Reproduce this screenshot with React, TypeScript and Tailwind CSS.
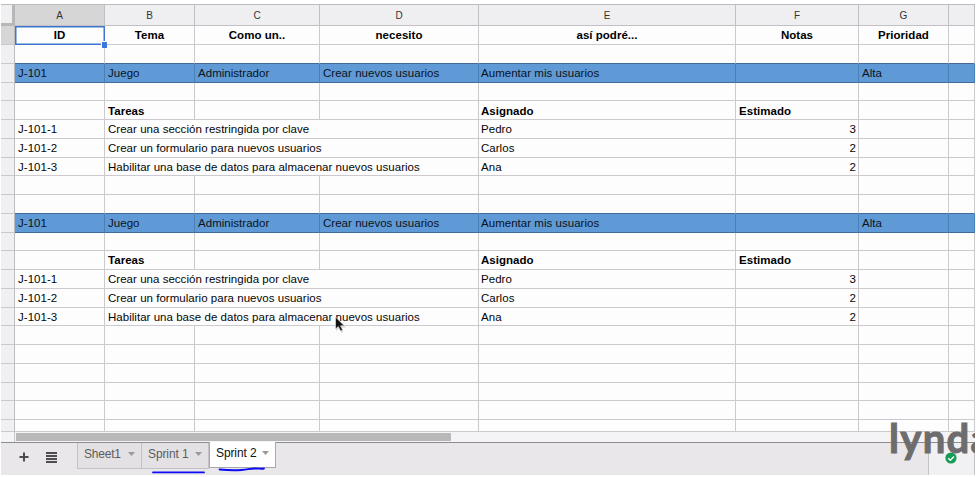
import React from "react";

type Row = {
  h: number;
  kind?: "head" | "story" | "task" | "tail";
  cells?: string[];
};

const titles = ["ID", "Tema", "Como un..", "necesito", "así podré...", "Notas", "Prioridad", ""];
const story = ["J-101", "Juego", "Administrador", "Crear nuevos usuarios", "Aumentar mis usuarios", "", "Alta", ""];
const labels = ["", "Tareas", "", "", "Asignado", "Estimado", "", ""];
const task1 = ["J-101-1", "Crear una sección restringida por clave", "Pedro", "3", "", ""];
const task2 = ["J-101-2", "Crear un formulario para nuevos usuarios", "Carlos", "2", "", ""];
const task3 = ["J-101-3", "Habilitar una base de datos para almacenar nuevos usuarios", "Ana", "2", "", ""];

const rows: Row[] = [
  { h: 19, kind: "head", cells: titles },
  { h: 19 },
  { h: 19, kind: "story", cells: story },
  { h: 18 },
  { h: 19, cells: labels },
  { h: 19, kind: "task", cells: task1 },
  { h: 19, kind: "task", cells: task2 },
  { h: 18, kind: "task", cells: task3 },
  { h: 19 },
  { h: 19, kind: "tail" },
  { h: 19, kind: "story", cells: story },
  { h: 18 },
  { h: 19, cells: labels },
  { h: 19, kind: "task", cells: task1 },
  { h: 19, kind: "task", cells: task2 },
  { h: 18, kind: "task", cells: task3 },
  { h: 19 },
  { h: 19 },
  { h: 19 },
  { h: 18 },
  { h: 19 },
  { h: 12 },
];

const grid = "grid grid-cols-[14px_90px_90px_125px_159px_257px_123px_90px_26px]";
const blank = ["", "", "", "", "", "", "", ""];

function SheetRow({ row, index }: { row: Row; index: number }) {
  const isStory = row.kind === "story";
  const isTask = row.kind === "task";
  const nextIsStory = rows[index + 1]?.kind === "story";
  const line = isStory || nextIsStory ? "border-b-[#426b98]" : "border-b-[#cccacf]";
  const lowered = index === 4 || row.h === 18;
  return (
    <div className={grid} style={{ height: row.h }}>
      <div
        className={`border-r border-b border-r-[#bdbbc0] border-b-[#c9c8cb] ${
          index === 0 ? "bg-[#d6d6d7]" : "bg-[#f0eff1]"
        }`}
      />
      {(row.cells ?? blank).map((text, i) => {
        const bold = row.kind === "head" || row.cells === labels;
        const column = isTask && i > 1 ? i + 2 : i;
        const align =
          row.kind === "head"
            ? "justify-center"
            : isTask && i === 3
              ? "justify-end pr-[2px]"
              : column === 4
                ? "pl-[2px]"
                : "pl-[3px]";
        return (
          <div
            key={i}
            className={`flex min-w-0 items-center whitespace-nowrap border-r border-b text-[11.5px] leading-none tracking-[0.03px] ${line} ${
              isStory ? "border-r-[#4b7fb8] bg-[#609ad6] text-[#0a121c]" : "border-r-[#cccacf] bg-[#fdfdfe] text-[#050505]"
            } ${bold ? "font-bold text-black" : ""} ${align} ${isTask && i === 1 ? "col-span-3" : ""}`}
          >
            {text && <span className={lowered ? "pt-[3px]" : "pt-px"}>{text}</span>}
          </div>
        );
      })}
    </div>
  );
}

function Caret() {
  return (
    <svg className="h-[4px] w-[7px]" viewBox="0 0 7 4">
      <path d="M0 0h7L3.5 4z" fill="#9b9a9b" />
    </svg>
  );
}

export default function App() {
  return (
    <div className="relative h-[477px] w-[976px] overflow-hidden bg-white pl-px pt-1 font-['Liberation_Sans',Arial,sans-serif]">
      <div className="w-[974px] overflow-hidden">
        <div className={`${grid} h-[22px] border-t border-[#bdbbbf]`}>
          <div className="border-r-[3px] border-b-[3px] border-[#b8b7b8] bg-[#f0eff1]" />
          {["A", "B", "C", "D", "E", "F", "G", ""].map((c, i) => (
            <div
              key={i}
              className={`flex items-center justify-center border-r border-b border-[#c2c0c4] pt-px text-[10px] leading-none text-[#333] ${
                i === 0 ? "bg-[#d6d6d7]" : "bg-[#efeff1]"
              }`}
            >
              {c}
            </div>
          ))}
        </div>
        <div>
          {rows.map((row, i) => (
            <SheetRow key={i} row={row} index={i} />
          ))}
        </div>
        <div className="flex h-[11px] items-center border-b border-[#8d8c8f] bg-[#f4f3f5]">
          <div className="h-full w-[14px] border-r border-[#c9c8cb]" />
          <div className="ml-px h-[8px] w-[435px] bg-[#b8b8b9]" />
        </div>
        <div className="flex h-[32px] bg-[#e9e7e9] text-[12px] text-[#5c5b5d]">
          <div className="flex w-[76px] items-start pl-[18px] pt-[9px]">
            <svg className="h-[10px] w-[10px]" viewBox="0 0 10 10" stroke="#4d4d4d" strokeWidth="2">
              <path d="M5 0.5v9M0.5 5h9" />
            </svg>
            <svg className="ml-[17px] h-[11px] w-[11px]" viewBox="0 0 11 11" stroke="#4d4d4d" strokeWidth="2">
              <path d="M0 1h11M0 4h11M0 7h11M0 10h11" />
            </svg>
          </div>
          <div className="flex h-[26px] w-[65px] items-center justify-between border border-t-0 border-[#c4c2c5] bg-[#e3e1e3] pb-[4px] pl-[6px] pr-[6px]">
            <span className="tracking-[-0.2px]">Sheet1</span>
            <Caret />
          </div>
          <div className="flex h-[26px] w-[67px] items-center justify-between border border-l-0 border-t-0 border-[#c4c2c5] bg-[#e3e1e3] pb-[4px] pl-[6px] pr-[6px]">
            <span className="tracking-[-0.1px]">Sprint 1</span>
            <Caret />
          </div>
          <div className="-mt-px flex h-[26px] w-[67px] items-center justify-between border border-t-0 border-[#aaa8ab] bg-white pb-[3px] pl-[6px] pr-[6px] text-[#111]">
            <span className="tracking-[-0.1px]">Sprint 2</span>
            <Caret />
          </div>
          <div className="ml-auto w-[47px] border-l border-r border-[#c5c3c6] bg-[#f1f0f2]" />
        </div>
      </div>

      {/* Active cell outline with its fill handle */}
      <div className="absolute left-[15px] top-[26px] h-[19px] w-[90px] shadow-[inset_0_0_0_1.5px_#3f76cb]" />
      <div className="absolute left-[101px] top-[41px] h-[7px] w-[6px] border-l border-t border-white bg-[#3c78d8]" />

      {/* Pen marks below the sprint tabs */}
      <svg className="absolute left-[145px] top-[464px] h-[12px] w-[130px]" viewBox="145 464 130 12" fill="none" stroke="#0b0bf5" strokeWidth="1.8" strokeLinecap="round">
        <path d="M153 472.4H204" />
        <path d="M219.5 469.5c8 .8 15 1 22 .5s8-1.600 14-1.500 5 .6 8.500 0" />
      </svg>

      <svg className="absolute left-[334px] top-[316px] h-[18px] w-[13px]" viewBox="0 0 13 18">
        <path d="M2 2v13l3-2.600 2.500 4.600 2-1-2.300-4.400H12z" fill="#999" opacity=".35" />
        <path d="M1.500 1v12l2.800-2.500 2.300 4.600 2.100-1-2.200-4.300h3.800z" fill="#111" stroke="#eee" strokeWidth=".6" />
      </svg>

      <div className="absolute left-[889px] top-[413px] h-[60px] w-[86px] overflow-hidden whitespace-nowrap font-['Lato',sans-serif] text-[40px] font-bold leading-[50px] tracking-[1.3px] text-[#6d6c6e] [-webkit-text-stroke:1px_#6d6c6e]">
        lynda
      </div>
      <svg className="absolute left-[945px] top-[452px] h-[12px] w-[12px]" viewBox="0 0 12 12">
        <circle cx="6" cy="6" r="5.600" fill="#169b56" />
        <path d="M3.300 6.200l2 2L9 4.400" fill="none" stroke="#fff" strokeWidth="1.400" />
      </svg>
    </div>
  );
}
